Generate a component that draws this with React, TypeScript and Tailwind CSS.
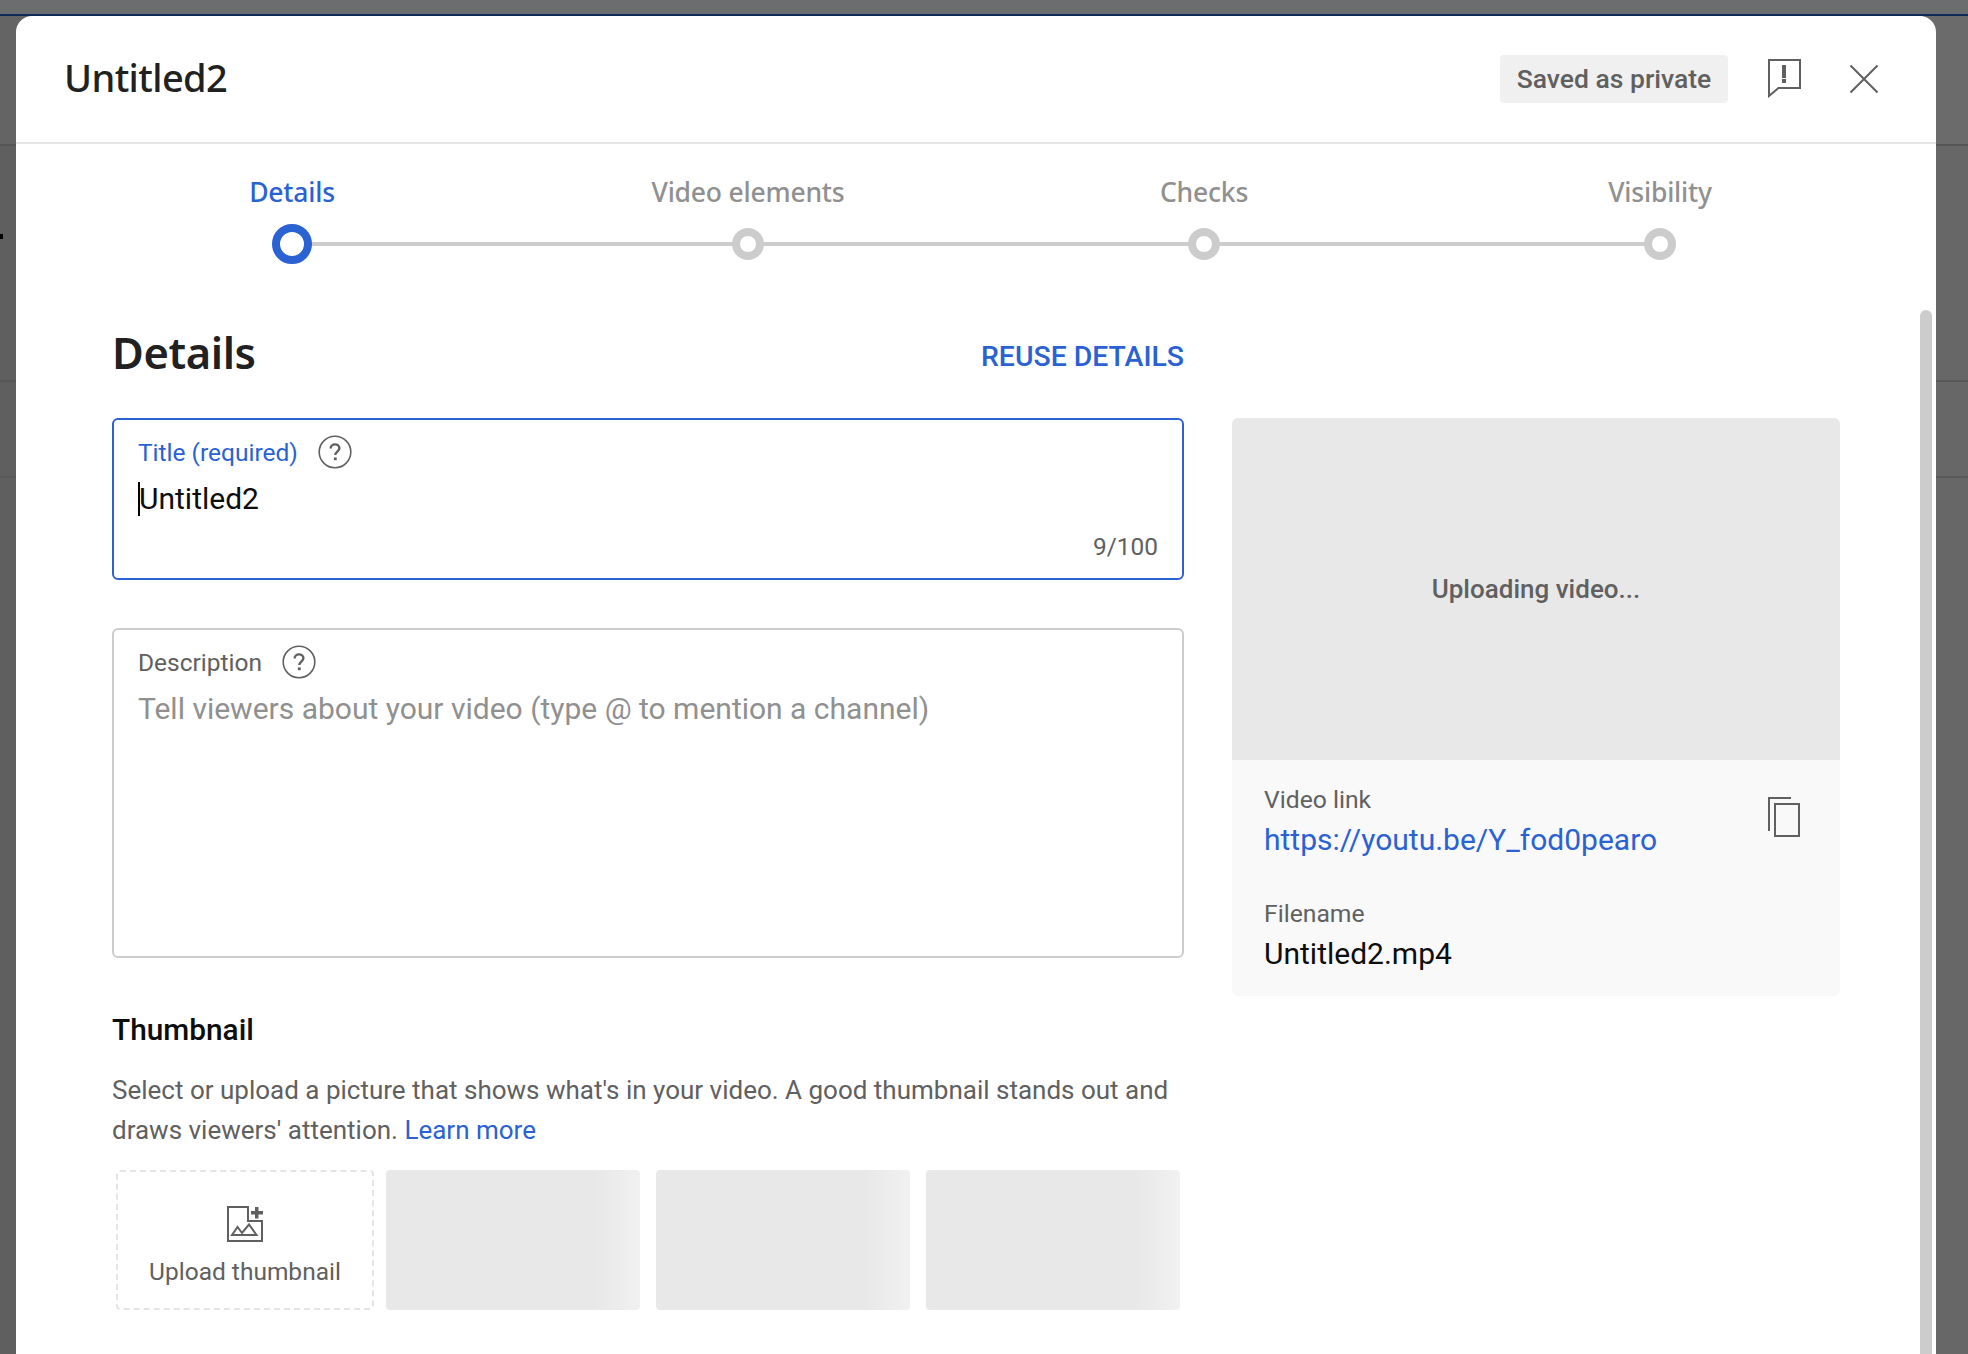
import { ReactNode } from "react";

const roboto = "font-[Roboto,sans-serif]";
const brand = "font-['Noto_Sans',sans-serif]";

function HelpIcon() {
  return (
    <svg width="34" height="34" viewBox="0 0 34 34" fill="none" className="shrink-0">
      <circle cx="17" cy="17" r="15.8" stroke="#606060" strokeWidth="1.6" />
      <path d="M12.6 13.6c0-2.5 2-4.2 4.4-4.2s4.4 1.6 4.4 3.9c0 3.2-4.1 3.4-4.1 6.7" stroke="#606060" strokeWidth="2.4" />
      <rect x="15.9" y="22.4" width="2.8" height="2.8" fill="#606060" />
    </svg>
  );
}

function FlagIcon() {
  return (
    <svg width="34" height="40" viewBox="0 0 34 40" fill="none">
      <path d="M2 2h31v28H11.5L2 38z" stroke="#606060" strokeWidth="2" />
      <rect x="15" y="7" width="4" height="13" fill="#606060" />
      <rect x="15" y="21" width="4" height="4" fill="#606060" />
    </svg>
  );
}

function CloseIcon() {
  return (
    <svg width="30" height="30" viewBox="0 0 30 30" fill="none">
      <path d="M1.5 1.5l27 27M28.5 1.5l-27 27" stroke="#606060" strokeWidth="2" />
    </svg>
  );
}

function CopyIcon() {
  return (
    <svg width="32" height="40" viewBox="0 0 32 40" fill="none">
      <path d="M1 34V1h22" stroke="#606060" strokeWidth="2" />
      <rect x="7" y="7" width="24" height="32" stroke="#606060" strokeWidth="2" />
    </svg>
  );
}

function UploadIcon() {
  return (
    <svg width="36" height="36" viewBox="0 0 36 36" fill="none">
      <path d="M1 1h20v14h14v20H1z" stroke="#606060" strokeWidth="2" />
      <path d="M28 1h3.5v4H36v3.5h-4.5v4H28v-4h-4V5h4z" fill="#606060" />
      <path d="M5 29l5.5-8 4.5 6 7-8.5L29.5 29z" stroke="#606060" strokeWidth="2" />
    </svg>
  );
}

function Step({ label, active, last }: { label: string; active?: boolean; last?: boolean }) {
  return (
    <div className="relative flex flex-col items-center">
      <span className={`${brand} text-[26.5px] leading-[34px] font-medium tracking-[-0.2px] ${active ? "text-[#2a62d4]" : "text-[#909090]"}`}>
        {label}
      </span>
      {!last && <div className="absolute left-1/2 top-[67px] h-1 w-full bg-[#cccccc]" />}
      <div className="relative mt-[15px] flex h-10 w-10 items-center justify-center">
        {active ? (
          <div className="h-10 w-10 rounded-full border-[8px] border-[#2a62d4] bg-white" />
        ) : (
          <div className="h-8 w-8 rounded-full border-[8px] border-[#cccccc] bg-white" />
        )}
      </div>
    </div>
  );
}

function Thumb() {
  return <div className="h-[140px] w-[254px] rounded-[4px] bg-[linear-gradient(90deg,#e8e8e8_0%,#e8e8e8_82%,#f1f1f1_100%)]" />;
}

function Meta({ label, children }: { label: string; children: ReactNode }) {
  return (
    <div>
      <div className="text-[24.7px] leading-[32px] text-[#606060]">{label}</div>
      <div className="mt-[4px] text-[30px] leading-[40px]">{children}</div>
    </div>
  );
}

export default function App() {
  return (
    <div className={`relative h-[1354px] w-[1968px] overflow-hidden bg-[linear-gradient(90deg,#5f5f5f,#676767)] ${roboto}`}>
      {/* dimmed page behind the dialog */}
      <div className="h-[14px] bg-[#6b6d6f]" />
      <div className="h-[2px] bg-[#0e2a5c]" />
      <div className="h-[130px] border-b-2 border-[#565656] bg-[linear-gradient(90deg,#646464,#6b6b6b)]" />
      <div className="mt-[234px] h-[2px] bg-[#575757]" />
      <div className="mt-[94px] h-[2px] bg-[#5a5a5a]" />
      <div className="absolute left-0 top-[234px] h-[5px] w-[3px] bg-black" />

      <div className="absolute left-4 top-4 h-[1338px] w-[1920px] rounded-t-[16px] bg-white">
        <header className="flex h-[128px] items-center border-b-2 border-[#e6e6e6] pl-12 pr-[57px]">
          <h1 className={`${brand} -mt-1 text-[38px] font-medium leading-none tracking-[-0.6px] text-[#212121]`}>Untitled2</h1>
          <div className="ml-auto flex h-12 w-[228px] items-center justify-center rounded-[4px] bg-[#f0f0f0] text-[26.5px] font-medium text-[#606060]">
            Saved as private
          </div>
          <div className="-mt-[2px] ml-[39px]">
            <FlagIcon />
          </div>
          <div className="ml-[48px]">
            <CloseIcon />
          </div>
        </header>

        <div className="grid grid-cols-[repeat(4,456px)] pl-12 pt-[31px]">
          <Step label="Details" active />
          <Step label="Video elements" />
          <Step label="Checks" />
          <Step label="Visibility" last />
        </div>

        <div className="mt-[59px] flex gap-12 pl-24">
          <div className="w-[1072px]">
            <div className="flex h-[95px] items-start justify-between">
              <h2 className={`${brand} text-[43.5px] font-semibold leading-[58px] tracking-[-0.4px] text-[#212121]`}>Details</h2>
              <button className="mt-[14px] text-[28.4px] font-medium leading-[40px] text-[#2a62d4]">REUSE DETAILS</button>
            </div>

            <div className="relative h-[162px] rounded-[6px] border-2 border-[#2a62d4] px-6 pt-[13px]">
              <div className="flex items-center gap-[20px] text-[24.5px] leading-[34px] text-[#2a62d4]">
                <span className="mt-[3px]">Title (required)</span>
                <HelpIcon />
              </div>
              <div className="mt-[9px] flex items-center text-[30px] leading-[40px] text-[#0d0d0d]">
                <span className="-mr-[1px] inline-block h-[34px] w-[2px] bg-black" />
                Untitled2
              </div>
              <div className="absolute bottom-[16px] right-6 text-[24.4px] leading-[30px] text-[#606060]">9/100</div>
            </div>

            <div className="mt-[48px] h-[330px] rounded-[6px] border-2 border-[#cccccc] px-6 pt-[13px]">
              <div className="flex items-center gap-[20px] text-[24.5px] leading-[34px] text-[#606060]">
                <span className="mt-[3px]">Description</span>
                <HelpIcon />
              </div>
              <div className="mt-[9px] text-[30px] leading-[40px] text-[#909090]">
                Tell viewers about your video (type @ to mention a channel)
              </div>
            </div>

            <h3 className="mt-[52px] text-[29.8px] font-medium leading-[40px] text-[#0d0d0d]">Thumbnail</h3>
            <p className="mt-[20px] text-[26px] leading-[40px] text-[#606060]">
              Select or upload a picture that shows what's in your video. A good thumbnail stands out and draws viewers' attention.{" "}
              <span className="text-[#2a62d4]">Learn more</span>
            </p>
            <div className="mt-[20px] flex gap-3 pl-1">
              <div className="flex h-[140px] w-[258px] flex-col items-center justify-center rounded-[4px] border-2 border-dashed border-[#e4e4e4] pt-[15px]">
                <UploadIcon />
                <span className="mt-[13px] text-[24.5px] leading-[34px] text-[#606060]">Upload thumbnail</span>
              </div>
              <div className="flex gap-4">
                <Thumb />
                <Thumb />
                <Thumb />
              </div>
            </div>
          </div>

          <aside className="mt-[95px] h-[578px] w-[608px] self-start overflow-hidden rounded-[6px] bg-[#f9f9f9]">
            <div className="flex h-[342px] items-center justify-center bg-[#e8e8e8] text-[26px] font-medium text-[#606060]">
              Uploading video...
            </div>
            <div className="flex justify-between pl-8 pr-10 pt-[24px]">
              <div className="flex flex-col gap-[38px]">
                <Meta label="Video link">
                  <span className="text-[#2a62d4]">https://youtu.be/Y_fod0pearo</span>
                </Meta>
                <Meta label="Filename">
                  <span className="text-[#0d0d0d]">Untitled2.mp4</span>
                </Meta>
              </div>
              <div className="mt-[13px]">
                <CopyIcon />
              </div>
            </div>
          </aside>
        </div>

        <div className="absolute right-1 top-[294px] h-[1044px] w-3 rounded-t-full bg-[#cccccc]" />
      </div>
    </div>
  );
}
